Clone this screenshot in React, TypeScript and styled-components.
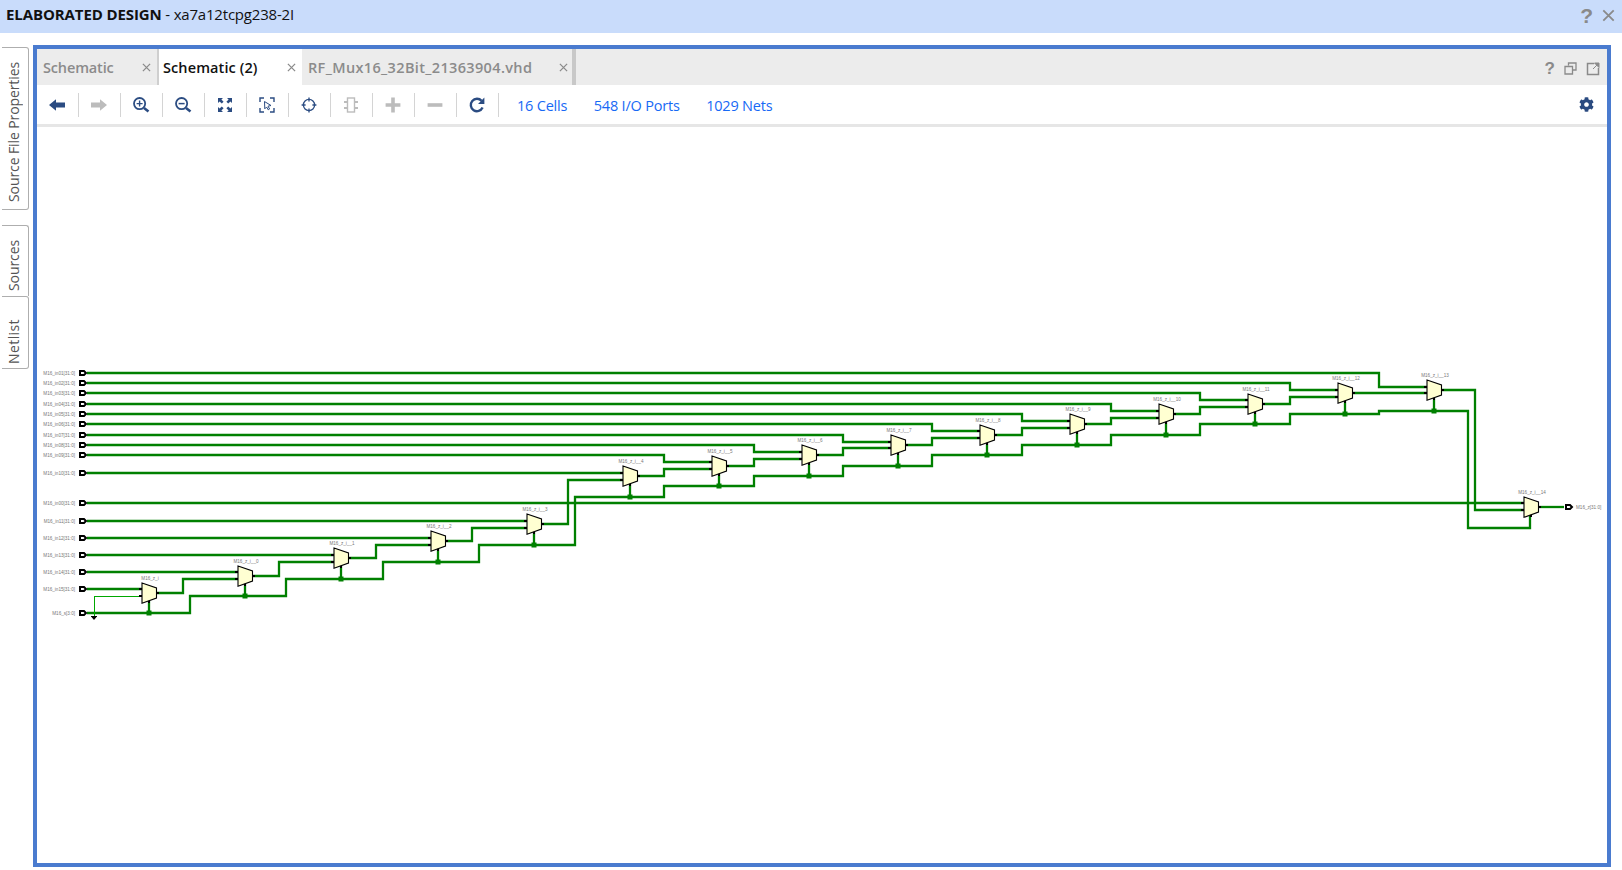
import React from "react";
import styled, { createGlobalStyle } from "styled-components";
import { FaCog } from "react-icons/fa";

const Global = createGlobalStyle`
  html, body { margin: 0; padding: 0; background: #fff; overflow: hidden; }
  body { font-family: "Open Sans", "Liberation Sans", sans-serif; }
  #root { width: 1622px; height: 870px; }
`;

const Page = styled.div`
  width: 1622px;
  height: 870px;
  display: flex;
  flex-direction: column;
  background: #fff;
`;

const TitleBar = styled.header`
  height: 33px;
  flex: none;
  background: #c9dcfb;
  display: flex;
  align-items: center;
  padding: 0 6px 5px 6px;
  box-sizing: border-box;
  font-size: 15px;
  color: #111;
`;

const TitleStrong = styled.span`
  font-weight: 700;
  letter-spacing: -0.1px;
  white-space: pre;
`;

const TitleRest = styled.span`
  white-space: pre;
  letter-spacing: -0.2px;
`;

const Spacer = styled.div`
  flex: 1;
`;

const HelpMark = styled.span<{ $size: number }>`
  font-family: "Liberation Sans", sans-serif;
  font-weight: 700;
  font-size: ${(p) => p.$size}px;
  line-height: 1;
  color: #8a8a8a;
`;

const TitleActions = styled.div`
  display: flex;
  align-items: center;
  gap: 9px;
  margin-right: 1px;
  margin-top: 3px;
`;

const Main = styled.div`
  flex: 1;
  min-height: 0;
  display: flex;
  padding: 12px 11px 3px 0;
  gap: 4px;
`;

const SideRail = styled.nav`
  width: 29px;
  flex: none;
  display: flex;
  flex-direction: column;
  padding-top: 2px;
`;

const SideTab = styled.div<{ $height: number; $gap?: number; $flatBottom?: boolean; $pad: number }>`
  height: ${(p) => p.$height}px;
  margin-bottom: ${(p) => p.$gap ?? 0}px;
  box-sizing: border-box;
  border: 1px solid #aeaeae;
  border-left: none;
  border-top-right-radius: 3px;
  border-bottom-right-radius: ${(p) => (p.$flatBottom ? 0 : 3)}px;
  border-bottom-width: ${(p) => (p.$flatBottom ? 0 : 1)}px;
  margin-left: 2px;
  display: flex;
  align-items: flex-end;
  justify-content: center;
  padding: 0 2px ${(p) => p.$pad}px 0;
`;

const SideLabel = styled.span<{ $track?: number }>`
  writing-mode: vertical-rl;
  transform: rotate(180deg);
  font-size: 14px;
  line-height: 18px;
  color: #555;
  white-space: nowrap;
  letter-spacing: ${(p) => p.$track ?? -0.1}px;
`;

const Panel = styled.section`
  flex: 1;
  min-width: 0;
  border: 4px solid #4a7bcf;
  display: flex;
  flex-direction: column;
  box-sizing: border-box;
`;

const TabBar = styled.div`
  height: 36px;
  flex: none;
  background: #ececec;
  display: flex;
  align-items: stretch;
`;

const Tab = styled.div<{ $w: number; $active?: boolean; $track: number; $end?: number }>`
  width: ${(p) => p.$w}px;
  box-sizing: border-box;
  padding: 0 ${(p) => p.$end ?? 6}px 0 ${(p) => (p.$active ? 4 : 6)}px;
  display: flex;
  align-items: center;
  justify-content: space-between;
  background: ${(p) => (p.$active ? "#fff" : "transparent")};
  border-left: ${(p) => (p.$active ? "2px solid #cfcfcf" : "none")};
  font-size: 14.5px;
  font-weight: 600;
  letter-spacing: ${(p) => p.$track}px;
  color: ${(p) => (p.$active ? "#111" : "#8b8b8b")};
`;

const TabEnd = styled.div`
  width: 4px;
  background: #c8c8c8;
`;

const TabActions = styled.div`
  display: flex;
  align-items: center;
  gap: 9px;
  padding: 3px 7px 0 0;
`;

const CloseIcon = ({ size = 9, color = "#8a8a8a" }: { size?: number; color?: string }) => (
  <svg width={size} height={size} viewBox="0 0 10 10">
    <path d="M1 1L9 9M9 1L1 9" stroke={color} strokeWidth="1.4" fill="none" />
  </svg>
);

const Toolbar = styled.div`
  height: 39px;
  flex: none;
  display: flex;
  align-items: center;
  background: #fff;
`;

const ToolButton = styled.div`
  width: 42px;
  height: 24px;
  flex: none;
  box-sizing: border-box;
  border-right: 1px solid #d4d4d4;
  padding-right: 1px;
  display: flex;
  align-items: center;
  justify-content: center;
`;

const Links = styled.div`
  display: flex;
  gap: 26.5px;
  padding: 2px 0 0 18px;
  font-size: 14.5px;
  color: #1769f5;
  letter-spacing: -0.2px;
`;

const GearBox = styled.div`
  display: flex;
  color: #2a4a80;
  padding-right: 13px;
`;

const Rule = styled.div`
  height: 3px;
  flex: none;
  background: #e6e6e6;
`;

const Canvas = styled.div`
  flex: 1;
  min-height: 0;
  display: flex;
`;

const SchematicSvg = styled.svg`
  width: 100%;
  height: 100%;
  display: block;
`;

const DARK = "#2b4c82";
const GREY = "#bcbcbc";

const Ico = ({ children }: { children: React.ReactNode }) => (
  <svg width="20" height="20" viewBox="0 0 20 20">
    {children}
  </svg>
);

const icons: React.ReactNode[] = [
  <Ico><path d="M2 10L9 4.2V7.4H18V12.6H9V15.8Z" fill={DARK} /></Ico>,
  <Ico><path d="M18 10L11 4.2V7.4H2V12.6H11V15.8Z" fill={GREY} /></Ico>,
  <Ico>
    <circle cx="8.6" cy="8.6" r="5.6" fill="none" stroke={DARK} strokeWidth="1.8" />
    <path d="M8.6 5.6V11.6M5.6 8.6H11.6" stroke={DARK} strokeWidth="1.4" />
    <path d="M13 13L17.5 16.5" stroke={DARK} strokeWidth="2.6" />
  </Ico>,
  <Ico>
    <circle cx="8.6" cy="8.6" r="5.6" fill="none" stroke={DARK} strokeWidth="1.8" />
    <path d="M5.6 8.6H11.6" stroke={DARK} strokeWidth="1.5" />
    <path d="M13 13L17.5 16.5" stroke={DARK} strokeWidth="2.6" />
  </Ico>,
  <Ico>
    <path d="M3 3H8L6.4 4.6L8.6 6.8L6.8 8.6L4.6 6.4L3 8ZM17 3V8L15.4 6.4L13.2 8.6L11.4 6.8L13.6 4.6L12 3ZM3 17V12L4.6 13.6L6.8 11.4L8.6 13.2L6.4 15.4L8 17ZM17 17H12L13.6 15.4L11.4 13.2L13.2 11.4L15.4 13.6L17 12Z" fill={DARK} />
  </Ico>,
  <Ico>
    <path d="M3 7V3H7M13 3H17V7M17 13V17H13M7 17H3V13" fill="none" stroke={DARK} strokeWidth="1.4" />
    <path d="M7.5 6.5L14 10.5L11 11.2L12.6 14L11.2 14.8L9.6 12L7.8 13.8Z" fill="#fff" stroke={DARK} strokeWidth="1" />
  </Ico>,
  <Ico>
    <circle cx="10" cy="10" r="5.6" fill="none" stroke={DARK} strokeWidth="1.3" />
    <path d="M10 2.6V6.6M10 13.4V17.4M2.6 10H6.6M13.4 10H17.4" stroke={DARK} strokeWidth="1.3" />
  </Ico>,
  <Ico>
    <rect x="6.5" y="3" width="7" height="14" fill="#fff" stroke={GREY} strokeWidth="1.4" />
    <path d="M3 7H6.5M3 13H6.5M13.5 7H17M13.5 13H17" stroke={GREY} strokeWidth="2" />
  </Ico>,
  <Ico><path d="M8.2 2.6H11.8V8.2H17.4V11.8H11.8V17.4H8.2V11.8H2.6V8.2H8.2Z" fill={GREY} /></Ico>,
  <Ico><path d="M2.6 8.2H17.4V11.8H2.6Z" fill={GREY} /></Ico>,
  <Ico>
    <path d="M15.6 12.6A6.2 6.2 0 1 1 14.6 5.8" fill="none" stroke={DARK} strokeWidth="2.4" />
    <path d="M17.4 2.6V9H11Z" fill={DARK} />
  </Ico>,
];

type Pt = [number, number];
const GREEN = "#008000";

const inputs: { n: string; y: number }[] = [
  { n: "01", y: 373 }, { n: "02", y: 383 }, { n: "03", y: 393 }, { n: "04", y: 404 },
  { n: "05", y: 414 }, { n: "06", y: 424 }, { n: "07", y: 435 }, { n: "08", y: 445 },
  { n: "09", y: 455 }, { n: "10", y: 473 }, { n: "00", y: 503 }, { n: "11", y: 521 },
  { n: "12", y: 538 }, { n: "13", y: 555 }, { n: "14", y: 572 }, { n: "15", y: 589 },
];

const muxes = [
  { label: "M16_z_i", x: 142, t: 583, a: 589, b: 596, o: 593, j: 613 },
  { label: "M16_z_i__0", x: 238, t: 566, a: 572, b: 579, o: 576, j: 596 },
  { label: "M16_z_i__1", x: 334, t: 548, a: 555, b: 562, o: 558, j: 579 },
  { label: "M16_z_i__2", x: 431, t: 531, a: 538, b: 545, o: 541, j: 562 },
  { label: "M16_z_i__3", x: 527, t: 514, a: 521, b: 528, o: 524, j: 545 },
  { label: "M16_z_i__4", x: 623, t: 466, a: 473, b: 480, o: 476, j: 497 },
  { label: "M16_z_i__5", x: 712, t: 456, a: 462, b: 469, o: 466, j: 486 },
  { label: "M16_z_i__6", x: 802, t: 445, a: 452, b: 459, o: 455, j: 476 },
  { label: "M16_z_i__7", x: 891, t: 435, a: 442, b: 448, o: 445, j: 466 },
  { label: "M16_z_i__8", x: 980, t: 425, a: 431, b: 438, o: 435, j: 455 },
  { label: "M16_z_i__9", x: 1070, t: 414, a: 421, b: 428, o: 424, j: 445 },
  { label: "M16_z_i__10", x: 1159, t: 404, a: 411, b: 418, o: 414, j: 435 },
  { label: "M16_z_i__11", x: 1248, t: 394, a: 400, b: 407, o: 404, j: 424 },
  { label: "M16_z_i__12", x: 1338, t: 383, a: 390, b: 397, o: 393, j: 414 },
  { label: "M16_z_i__13", x: 1427, t: 380, a: 387, b: 393, o: 390, j: 411 },
  { label: "M16_z_i__14", x: 1524, t: 497, a: 503, b: 510, o: 507, j: 528 },
];

const wires: Pt[][] = [
  [[87, 373], [1379, 373], [1379, 387], [1427, 387]],
  [[87, 383], [1290, 383], [1290, 390], [1338, 390]],
  [[87, 393], [1200, 393], [1200, 400], [1248, 400]],
  [[87, 404], [1111, 404], [1111, 411], [1159, 411]],
  [[87, 414], [1022, 414], [1022, 421], [1070, 421]],
  [[87, 424], [932, 424], [932, 431], [980, 431]],
  [[87, 435], [843, 435], [843, 442], [891, 442]],
  [[87, 445], [754, 445], [754, 452], [802, 452]],
  [[87, 455], [664, 455], [664, 462], [712, 462]],
  [[87, 473], [623, 473]],
  [[87, 503], [1524, 503]],
  [[87, 521], [527, 521]],
  [[87, 538], [431, 538]],
  [[87, 555], [334, 555]],
  [[87, 572], [238, 572]],
  [[87, 589], [142, 589]],
  [[156, 593], [183, 593], [183, 579], [238, 579]],
  [[252, 576], [279, 576], [279, 562], [334, 562]],
  [[348, 558], [376, 558], [376, 545], [431, 545]],
  [[445, 541], [472, 541], [472, 528], [527, 528]],
  [[541, 524], [568, 524], [568, 480], [623, 480]],
  [[637, 476], [664, 476], [664, 469], [712, 469]],
  [[726, 466], [754, 466], [754, 459], [802, 459]],
  [[816, 455], [843, 455], [843, 448], [891, 448]],
  [[905, 445], [932, 445], [932, 438], [980, 438]],
  [[994, 435], [1022, 435], [1022, 428], [1070, 428]],
  [[1084, 424], [1111, 424], [1111, 418], [1159, 418]],
  [[1173, 414], [1200, 414], [1200, 407], [1248, 407]],
  [[1262, 404], [1290, 404], [1290, 397], [1338, 397]],
  [[1352, 393], [1427, 393]],
  [[1441, 390], [1475, 390], [1475, 510], [1524, 510]],
  [[1538, 507], [1564, 507]],
  [
    [87, 613], [190, 613], [190, 596], [286, 596], [286, 579], [383, 579], [383, 562], [479, 562],
    [479, 545], [575, 545], [575, 497], [664, 497], [664, 486], [754, 486], [754, 476], [843, 476],
    [843, 466], [932, 466], [932, 455], [1022, 455], [1022, 445], [1111, 445], [1111, 435], [1200, 435],
    [1200, 424], [1290, 424], [1290, 414], [1379, 414], [1379, 411], [1468, 411], [1468, 528], [1530, 528],
    [1530, 516],
  ],
];

const pts = (p: Pt[]) => p.map((q) => q.join(",")).join(" ");

const labelStyle = { fontFamily: '"Liberation Sans", sans-serif', fontSize: 4.6, fill: "#777" };

const Port = ({ x, y }: { x: number; y: number }) => (
  <path
    d={`M${x + 1} ${y - 2}H${x + 5}L${x + 7} ${y}L${x + 5} ${y + 2}H${x + 1}Z`}
    fill="#fff"
    stroke="#000"
    strokeWidth="2"
  />
);

const Schematic = () => (
  <SchematicSvg viewBox="37 127 1570 736" preserveAspectRatio="xMinYMin meet">
    {wires.map((w, i) => (
      <polyline key={i} points={pts(w)} fill="none" stroke={GREEN} strokeWidth="2.3" strokeLinejoin="miter" />
    ))}
    <path d="M94 617V596H139" fill="none" stroke="#00a800" strokeWidth="1" shapeRendering="crispEdges" />
    <path d="M91.5 617H96.5L94 620Z" fill="#000" />
    <path d="M91 616.5H97" stroke="#000" strokeWidth="1" />
    {inputs.map((p) => (
      <g key={p.n}>
        <text x={75} y={p.y + 1.7} textAnchor="end" style={labelStyle}>{`M16_in${p.n}[31:0]`}</text>
        <Port x={79} y={p.y} />
      </g>
    ))}
    <text x={75} y={614.7} textAnchor="end" style={labelStyle}>M16_s[3:0]</text>
    <Port x={79} y={613} />
    <Port x={1565} y={507} />
    <text x={1576} y={508.7} style={labelStyle}>M16_z[31:0]</text>
    {muxes.map((m) => {
      const stemX = m.x + 7;
      const isLast = m.label.endsWith("14");
      return (
        <g key={m.label}>
          {!isLast && <path d={`M${stemX} ${m.t + 18}V${m.j}`} stroke={GREEN} strokeWidth="2.3" />}
          {!isLast && <rect x={stemX - 2.5} y={m.j - 2.5} width={5} height={5} fill={GREEN} />}
          <path
            d={`M${m.x - 3} ${m.a}H${m.x}M${m.x - 3} ${m.b}H${m.x}M${m.x + 14} ${m.o}H${m.x + 17}M${stemX} ${m.t + 17}V${m.t + 20}`}
            stroke="#000"
            strokeWidth="2"
            shapeRendering="crispEdges"
          />
          <path
            d={`M${m.x} ${m.t}L${m.x + 14.5} ${m.t + 5}V${m.t + 15}L${m.x} ${m.t + 20.3}Z`}
            fill="#ffffd2"
            stroke="#000"
            strokeWidth="1.1"
          />
          <text x={m.x + 8} y={m.t - 3.5} textAnchor="middle" style={labelStyle}>{m.label}</text>
        </g>
      );
    })}
  </SchematicSvg>
);

export default function App() {
  return (
    <Page>
      <Global />
      <TitleBar>
        <TitleStrong>ELABORATED DESIGN</TitleStrong>
        <TitleRest> - xa7a12tcpg238-2I</TitleRest>
        <Spacer />
        <TitleActions>
          <HelpMark $size={21}>?</HelpMark>
          <CloseIcon size={13} />
        </TitleActions>
      </TitleBar>
      <Main>
        <SideRail>
          <SideTab $height={163} $gap={15} $pad={7}><SideLabel>Source File Properties</SideLabel></SideTab>
          <SideTab $height={71} $flatBottom $pad={5}><SideLabel>Sources</SideLabel></SideTab>
          <SideTab $height={73} $pad={4}><SideLabel $track={0.4}>Netlist</SideLabel></SideTab>
        </SideRail>
        <Panel>
          <TabBar>
            <Tab $w={120} $track={-0.15}>Schematic<CloseIcon /></Tab>
            <Tab $w={145} $active $track={0.1}>Schematic (2)<CloseIcon /></Tab>
            <Tab $w={270} $track={0.35} $end={4}>RF_Mux16_32Bit_21363904.vhd<CloseIcon /></Tab>
            <TabEnd />
            <Spacer />
            <TabActions>
              <HelpMark $size={17}>?</HelpMark>
              <svg width="13" height="13" viewBox="0 0 13 13">
                <path d="M4.5 3.5V1H12V8H9M1 4.5H8.5V12H1Z" fill="none" stroke="#8a8a8a" strokeWidth="1.3" />
              </svg>
              <svg width="14" height="14" viewBox="0 0 14 14">
                <path d="M8 1.5H1.5V12.5H12.5V6" fill="none" stroke="#8a8a8a" strokeWidth="1.5" />
                <path d="M7 7L12 2M8.5 1H13V5.5Z" fill="#8a8a8a" stroke="#8a8a8a" strokeWidth="1" />
              </svg>
            </TabActions>
          </TabBar>
          <Toolbar>
            {icons.map((ic, i) => (
              <ToolButton key={i}>{ic}</ToolButton>
            ))}
            <Links>
              <span>16 Cells</span>
              <span>548 I/O Ports</span>
              <span>1029 Nets</span>
            </Links>
            <Spacer />
            <GearBox><FaCog size={15} /></GearBox>
          </Toolbar>
          <Rule />
          <Canvas><Schematic /></Canvas>
        </Panel>
      </Main>
    </Page>
  );
}
